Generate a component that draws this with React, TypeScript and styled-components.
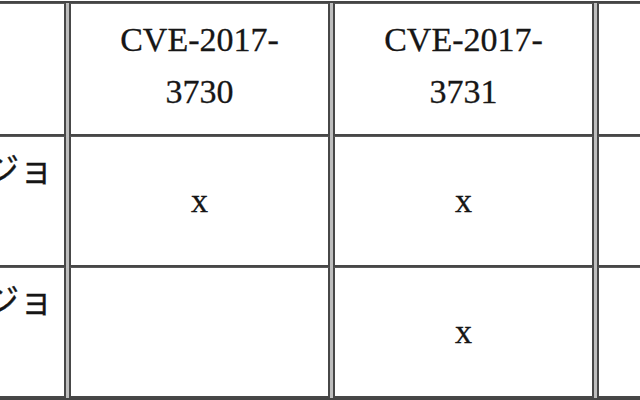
import React from 'react';
import styled, { createGlobalStyle } from 'styled-components';

const GlobalStyle = createGlobalStyle`
  html, body {
    margin: 0;
    padding: 0;
    background: #ffffff;
    overflow: hidden;
  }
`;

const Viewport = styled.div`
  width: 640px;
  height: 400px;
  overflow: hidden;
  background: #ffffff;
`;

const Table = styled.table`
  box-sizing: border-box;
  width: 968px;
  min-width: 968px;
  margin: 1px 0 0 -105px;
  table-layout: fixed;
  border-collapse: separate;
  border-spacing: 3px 0;
  border: 2px solid #454545;
  background: #bdbdbd;
  font-family: 'Liberation Serif', 'Noto Sans CJK JP', serif;
  font-size: 34px;
  line-height: 52px;
  color: #161616;
  -webkit-text-stroke: 0.3px #161616;
`;

const Cell = styled.td`
  box-sizing: border-box;
  background: #ffffff;
  border-left: 2px solid #474747;
  border-right: 2px solid #474747;
  border-top: 1px solid #5a5a5a;
  border-bottom: 2px solid #474747;
  vertical-align: middle;
`;

const CornerCell = styled(Cell).attrs({ as: 'th' })`
  width: 166px;
  padding: 10px 12px 16px;
`;

const HeadCell = styled(Cell).attrs({ as: 'th' })`
  width: 261px;
  padding: 10px 22px 16px;
  font-weight: normal;
  text-align: center;
`;

const LabelCell = styled(Cell)`
  padding: 8px 8px 16px 16px;
  text-align: left;
`;

const MarkCell = styled(Cell)`
  padding: 12px 24px;
  text-align: center;
`;

const cves = ['3730', '3731', '3732'];

const rows = [
  { label: 'バージョン', marks: [true, true, true] },
  { label: 'バージョン', marks: [false, true, true] },
];

export default function App() {
  return (
    <Viewport>
      <GlobalStyle />
      <Table>
        <thead>
          <tr>
            <CornerCell />
            {cves.map((id) => (
              <HeadCell key={id}>
                CVE-2017-<wbr />
                {id}
              </HeadCell>
            ))}
          </tr>
        </thead>
        <tbody>
          {rows.map((row, i) => (
            <tr key={i}>
              <LabelCell>{row.label}</LabelCell>
              {row.marks.map((mark, j) => (
                <MarkCell key={j}>{mark ? 'x' : ''}</MarkCell>
              ))}
            </tr>
          ))}
        </tbody>
      </Table>
    </Viewport>
  );
}
